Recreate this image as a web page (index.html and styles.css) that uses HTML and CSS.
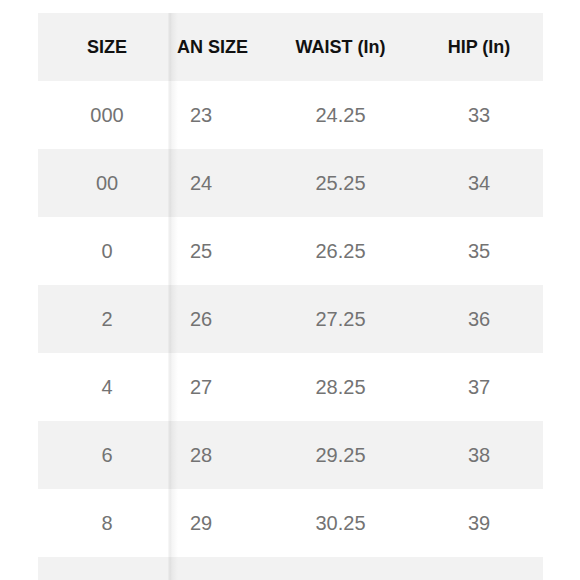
FILE: index.html
```html
<!DOCTYPE html>
<html>
<head>
<meta charset="utf-8">
<link rel="stylesheet" href="styles.css">
</head>
<body>
<div class="chart">
  <div class="row head">
    <div class="cell c1">SIZE</div>
    <div class="cell c2">AN SIZE</div>
    <div class="cell c3">WAIST (In)</div>
    <div class="cell c4">HIP (In)</div>
  </div>
  <div class="row">
    <div class="cell c1">000</div><div class="cell c2">23</div><div class="cell c3">24.25</div><div class="cell c4">33</div>
  </div>
  <div class="row alt">
    <div class="cell c1">00</div><div class="cell c2">24</div><div class="cell c3">25.25</div><div class="cell c4">34</div>
  </div>
  <div class="row">
    <div class="cell c1">0</div><div class="cell c2">25</div><div class="cell c3">26.25</div><div class="cell c4">35</div>
  </div>
  <div class="row alt">
    <div class="cell c1">2</div><div class="cell c2">26</div><div class="cell c3">27.25</div><div class="cell c4">36</div>
  </div>
  <div class="row">
    <div class="cell c1">4</div><div class="cell c2">27</div><div class="cell c3">28.25</div><div class="cell c4">37</div>
  </div>
  <div class="row alt">
    <div class="cell c1">6</div><div class="cell c2">28</div><div class="cell c3">29.25</div><div class="cell c4">38</div>
  </div>
  <div class="row">
    <div class="cell c1">8</div><div class="cell c2">29</div><div class="cell c3">30.25</div><div class="cell c4">39</div>
  </div>
  <div class="row alt">
    <div class="cell c1"></div><div class="cell c2"></div><div class="cell c3"></div><div class="cell c4"></div>
  </div>
  <div class="shadow"></div>
</div>
</body>
</html>
```

FILE: styles.css
```css
html, body {
  margin: 0;
  padding: 0;
  background: #ffffff;
  overflow: hidden;
}
body {
  width: 580px;
  height: 580px;
  font-family: "Liberation Sans", Arial, sans-serif;
}
.chart {
  position: relative;
  margin: 13px 0 0 38px;
  width: 505px;
}
.row {
  display: grid;
  grid-template-columns: 138px 90px 149px 128px;
  height: 68px;
  align-items: center;
  background: #ffffff;
  font-size: 20px;
  color: #737373;
}
.row.alt, .row.head {
  background: #f2f2f2;
}
.row.head {
  font-size: 18px;
  font-weight: bold;
  color: #111111;
}
.cell {
  text-align: center;
  white-space: nowrap;
}
.cell.c2 {
  text-align: left;
  padding-left: 14px;
}
.head .cell.c2 {
  padding-left: 1px;
}
.shadow {
  position: absolute;
  top: 0;
  bottom: 0;
  left: 130px;
  width: 10px;
  background: linear-gradient(to right, rgba(0,0,0,0.02) 0px, rgba(0,0,0,0.08) 2px, rgba(0,0,0,0.04) 4px, rgba(0,0,0,0) 10px);
}
```
